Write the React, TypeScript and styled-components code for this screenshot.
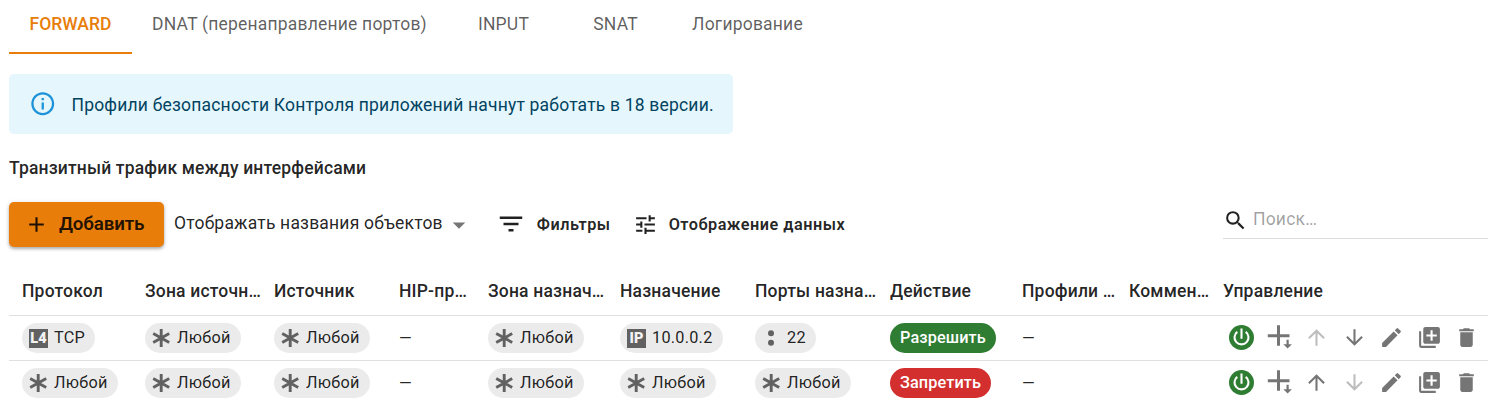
import React from 'react';
import styled, { createGlobalStyle, css } from 'styled-components';
import {
  MdAdd, MdArrowDownward, MdArrowDropDown, MdArrowUpward, MdDelete, MdEdit,
  MdFilterList, MdLibraryAdd, MdSearch, MdTune, MdOutlineInfo,
} from 'react-icons/md';

const GlobalStyle = createGlobalStyle`
  * { box-sizing: border-box; }
  body {
    margin: 0;
    background: #fff;
    color: rgba(0, 0, 0, 0.87);
    font-family: Roboto, "Liberation Sans", sans-serif;
    letter-spacing: 0.19px;
    overflow: hidden;
  }
  button, input { font: inherit; letter-spacing: inherit; color: inherit; border: 0; background: none; padding: 0; }
  svg { flex: none; display: block; }
`;

const Page = styled.main`
  width: 100%;
  height: 403px;
  padding-left: 9px;
  overflow: hidden;
`;

const Tabs = styled.nav`
  display: flex;
  height: 54px;
`;

const Tab = styled.button<{ $active?: boolean; $width: number }>`
  width: ${p => p.$width}px;
  padding-bottom: 4px;
  font-size: 17.5px;
  font-weight: ${p => (p.$active ? 500 : 400)};
  letter-spacing: ${p => (p.$active ? 0 : 0.2)}px;
  white-space: nowrap;
  color: ${p => (p.$active ? '#e87d0a' : 'rgba(0, 0, 0, 0.64)')};
  border-bottom: 2px solid ${p => (p.$active ? '#e87d0a' : 'transparent')};
`;

const Alert = styled.section`
  display: flex;
  align-items: center;
  width: 724px;
  height: 60px;
  margin-top: 20px;
  padding-left: 20px;
  gap: 15px;
  border-radius: 5px;
  background: #e5f6fd;
  color: #014361;
  font-size: 17.5px;
  svg { color: #1c93d8; }
`;

const AlertText = styled.span`
  padding-top: 2px;
`;

const Title = styled.h2`
  margin: 0;
  padding: 22px 0 1px;
  font-size: 17.5px;
  line-height: 24px;
  font-weight: 500;
  letter-spacing: 0.16px;
`;

const Toolbar = styled.div`
  display: flex;
  height: 46px;
  margin-top: 21px;
  align-items: center;
`;

const AddButton = styled.button`
  display: flex;
  align-items: center;
  align-self: flex-start;
  width: 155px;
  height: 45px;
  padding-left: 15px;
  gap: 10px;
  border-radius: 5px;
  background: #e87d0a;
  font-size: 18.75px;
  font-weight: 600;
  letter-spacing: -0.15px;
  box-shadow: 0 2px 3px rgba(0, 0, 0, 0.24), 0 1px 5px rgba(0, 0, 0, 0.14);
`;

const ButtonLabel = styled.span`
  padding-bottom: 2px;
`;

const Select = styled.button`
  display: flex;
  align-items: center;
  margin-left: 10px;
  gap: 1px;
  font-size: 17.5px;
  svg { color: rgba(0, 0, 0, 0.54); }
`;

const SelectLabel = styled.span`
  padding-bottom: 4px;
`;

const TextButton = styled.button<{ $left: number; $gap: number }>`
  display: flex;
  align-items: center;
  margin-left: ${p => p.$left}px;
  padding-bottom: 2px;
  gap: ${p => p.$gap}px;
  font-size: 16.25px;
  font-weight: 600;
  letter-spacing: 0.5px;
`;

const Search = styled.label`
  display: flex;
  align-items: center;
  align-self: flex-start;
  width: 265px;
  height: 37px;
  margin-left: auto;
  gap: 5px;
  border-bottom: 1px solid #dcdcdc;
  font-size: 17.5px;
  input { width: 200px; height: 24px; margin-bottom: 2px; outline: none; }
  input::placeholder { color: rgba(0, 0, 0, 0.38); opacity: 1; }
`;

const Table = styled.div`
  margin-top: 19px;
`;

const Row = styled.div<{ $head?: boolean }>`
  display: grid;
  grid-template-columns: 123px 129px 125px 89px 132px 135px 135px 132px 107px 94px 1fr;
  align-items: center;
  height: ${p => (p.$head ? 49 : 45)}px;
  border-bottom: 1px solid #e0e0e0;
`;

const HeadCell = styled.div`
  padding-left: 13px;
  font-size: 17.5px;
  font-weight: 500;
  line-height: 24px;
  white-space: nowrap;
`;

const Cell = styled.div`
  display: flex;
  align-items: center;
  padding-left: 13px;
  font-size: 16.25px;
`;

const Chip = styled.span<{ $tone?: 'allow' | 'deny' }>`
  display: inline-flex;
  align-items: center;
  height: 30px;
  padding: 0 10px 0 6px;
  gap: 6px;
  border-radius: 15px;
  background: #ebebeb;
  font-size: 16.25px;
  letter-spacing: 0.25px;
  ${p => p.$tone && css`
    padding: 0 10px;
    color: #fff;
    font-weight: 500;
    letter-spacing: 0.12px;
    background: ${p.$tone === 'allow' ? '#2e7d32' : '#d32f2f'};
  `}
`;

const ChipLabel = styled.span`
  padding-bottom: 2px;
`;

const Badge = styled.span`
  display: flex;
  align-items: center;
  justify-content: center;
  width: 19px;
  height: 19px;
  margin-left: 1px;
  background: #616161;
  color: #f2f2f2;
  font-size: 14.5px;
  font-weight: 900;
  letter-spacing: 0;
`;

const Actions = styled.div`
  display: flex;
  align-items: center;
  padding: 0 0 1px 19px;
  gap: 12.5px;
`;

const Action = styled.button<{ $disabled?: boolean }>`
  width: 25px;
  height: 25px;
  color: ${p => (p.$disabled ? 'rgba(0, 0, 0, 0.26)' : 'rgba(0, 0, 0, 0.54)')};
`;

const Asterisk = () => (
  <svg width="20" height="20" viewBox="0 0 20 20" stroke="#616161" strokeWidth="2.9">
    <path d="M10.2 1v18M2.2 5.6l16 8.8M18.2 5.6l-16 8.8" />
  </svg>
);

const Colon = () => (
  <svg width="20" height="20" viewBox="0 0 20 20" fill="#616161">
    <circle cx="10" cy="5.3" r="3" />
    <circle cx="10" cy="14.8" r="3" />
  </svg>
);

const Power = () => (
  <svg width="25" height="25" viewBox="0 0 25 25" fill="none">
    <circle cx="12.5" cy="12.5" r="12.5" fill="#2e7d32" />
    <path d="M12.5 3.4v10.4M8.3 6.8a7 7 0 1 0 8.4 0" stroke="#fff" strokeWidth="2.1" />
  </svg>
);

const InsertBelow = () => (
  <svg width="25" height="25" viewBox="0 0 25 25" fill="currentColor">
    <path d="M10 .2h3v9.1h9.5v2.9H13v8.6h-3v-8.6H.8V9.3H10z" />
    <path d="M19.5 14.8h2.2v4.4h3.2l-4.3 4.4-4.3-4.4h3.2z" />
  </svg>
);

type Item = string | null;
const icons: Record<string, React.ReactNode> = {
  TCP: <Badge>L4</Badge>,
  '10.0.0.2': <Badge>IP</Badge>,
  '22': <Colon />,
};

const columns = [
  'Протокол', 'Зона источн…', 'Источник', 'HIP-пр…', 'Зона назнач…', 'Назначение',
  'Порты назна…', 'Действие', 'Профили …', 'Коммен…', 'Управление',
];

const any = 'Любой';
const rules: { items: Item[]; allow: boolean }[] = [
  { items: ['TCP', any, any, null, any, '10.0.0.2', '22'], allow: true },
  { items: [any, any, any, null, any, any, any], allow: false },
];

export default function App() {
  return (
    <>
      <GlobalStyle />
      <Page>
        <Tabs>
          <Tab $active $width={123}>FORWARD</Tab>
          <Tab $width={315}>DNAT (перенаправление портов)</Tab>
          <Tab $width={113}>INPUT</Tab>
          <Tab $width={111}>SNAT</Tab>
          <Tab $width={153}>Логирование</Tab>
        </Tabs>
        <Alert>
          <MdOutlineInfo size={27.5} />
          <AlertText>Профили безопасности Контроля приложений начнут работать в 18 версии.</AlertText>
        </Alert>
        <Title>Транзитный трафик между интерфейсами</Title>
        <Toolbar>
          <AddButton><MdAdd size={25} /><ButtonLabel>Добавить</ButtonLabel></AddButton>
          <Select><SelectLabel>Отображать названия объектов</SelectLabel><MdArrowDropDown size={30} /></Select>
          <TextButton $left={22} $gap={11}><MdFilterList size={30} />Фильтры</TextButton>
          <TextButton $left={22} $gap={11}><MdTune size={25} />Отображение данных</TextButton>
          <Search><MdSearch size={25} /><input placeholder="Поиск…" /></Search>
        </Toolbar>
        <Table>
          <Row $head>
            {columns.map(name => <HeadCell key={name}>{name}</HeadCell>)}
          </Row>
          {rules.map(({ items, allow }, i) => (
            <Row key={i}>
              {items.map((item, n) => (
                <Cell key={n}>
                  {item ? <Chip>{icons[item] ?? <Asterisk />}<ChipLabel>{item}</ChipLabel></Chip> : '—'}
                </Cell>
              ))}
              <Cell>
                <Chip $tone={allow ? 'allow' : 'deny'}>
                  <ChipLabel>{allow ? 'Разрешить' : 'Запретить'}</ChipLabel>
                </Chip>
              </Cell>
              <Cell>—</Cell>
              <Cell />
              <Actions>
                <Action><Power /></Action>
                <Action><InsertBelow /></Action>
                <Action $disabled={i === 0}><MdArrowUpward size={25} /></Action>
                <Action $disabled={i === rules.length - 1}><MdArrowDownward size={25} /></Action>
                <Action><MdEdit size={25} /></Action>
                <Action><MdLibraryAdd size={25} /></Action>
                <Action><MdDelete size={25} /></Action>
              </Actions>
            </Row>
          ))}
        </Table>
      </Page>
    </>
  );
}
